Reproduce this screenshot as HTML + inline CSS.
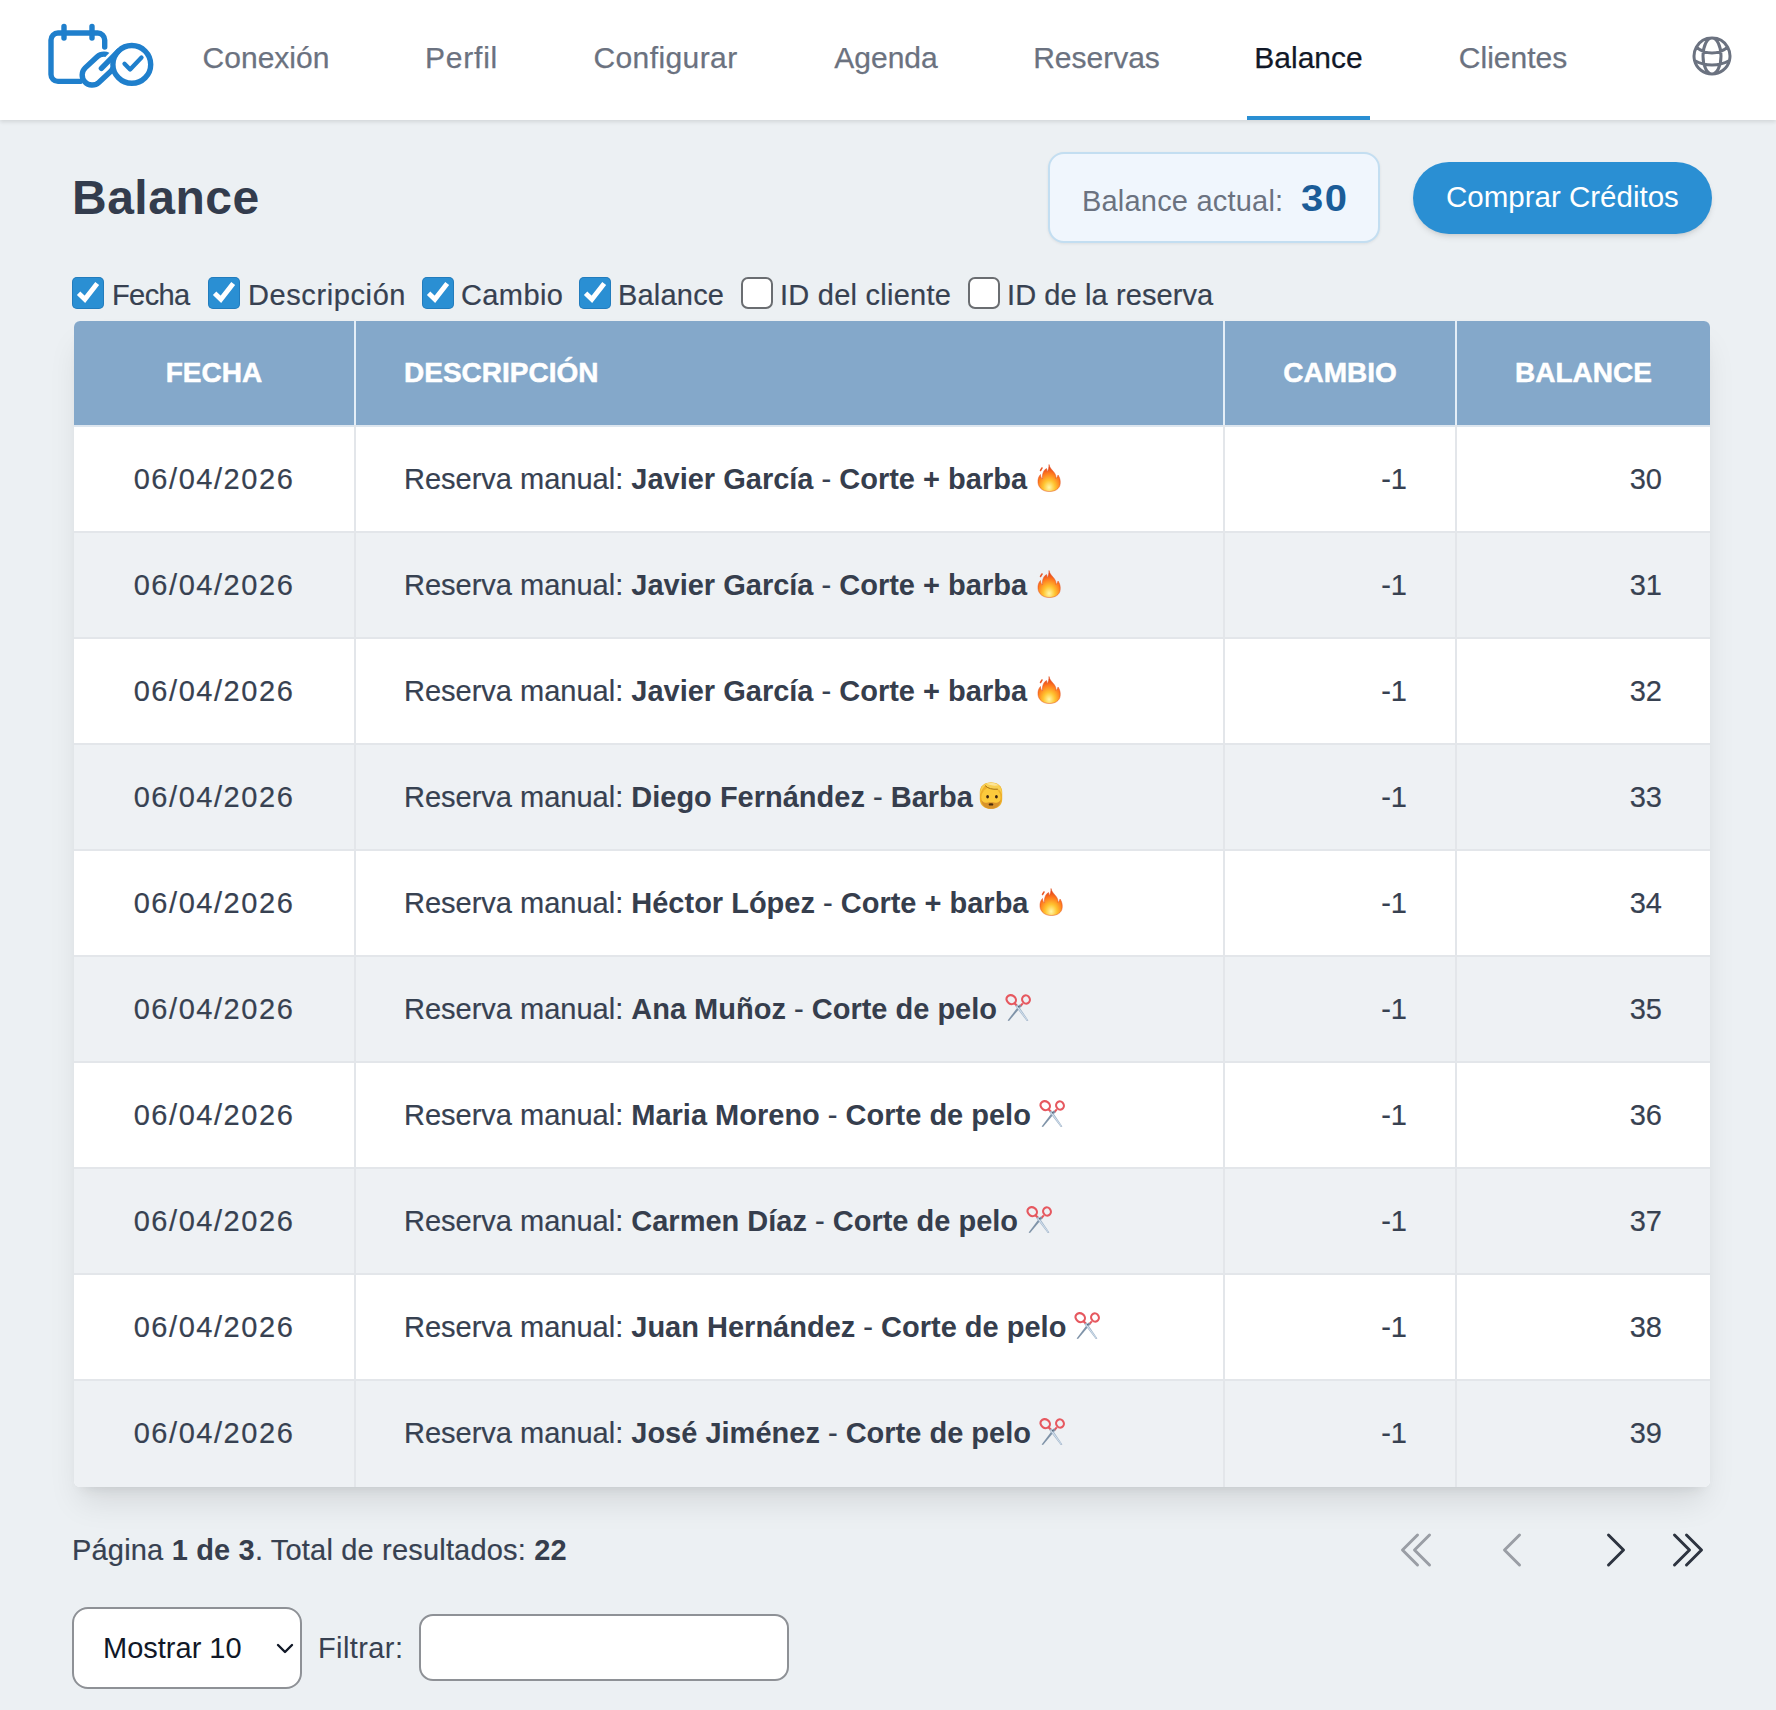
<!DOCTYPE html>
<html lang="es">
<head>
<meta charset="utf-8">
<title>Balance</title>
<style>
html,body{margin:0;padding:0}
body{width:1776px;height:1710px;overflow:hidden;position:relative;background:#ecf0f3;font-family:"Liberation Sans",sans-serif;color:#374151}
.abs{position:absolute}
.t{position:absolute;white-space:nowrap;line-height:40px;height:40px}
/* header */
#hdr{position:absolute;left:0;top:0;width:1776px;height:120px;background:#fff;box-shadow:0 2px 4px rgba(0,0,0,.11)}
.nav{position:absolute;top:37.6px;font-size:30px;color:#6b7280;-webkit-text-stroke:0.25px currentColor;line-height:40px;white-space:nowrap;transform:translateX(-50%)}
.nav.on{color:#111827}
#uline{position:absolute;left:1247px;top:116px;width:123px;height:4px;background:#2a8fd3}
/* title */
#title{position:absolute;left:72px;top:178px;font-size:48px;font-weight:700;color:#333c4d;line-height:40px;letter-spacing:0.5px}
#balbox{position:absolute;left:1048px;top:152px;width:328px;height:87px;border:2px solid #c3def1;border-radius:16px;background:#f0f6fd;box-sizing:content-box;box-shadow:0 1px 3px rgba(0,0,0,.07)}
#buy{position:absolute;left:1413px;top:162px;width:299px;height:72px;border-radius:36px;background:#2a8fd3;color:#fff;box-shadow:0 4px 6px -1px rgba(0,0,0,.10),0 2px 4px -2px rgba(0,0,0,.10)}
/* checkboxes */
.cb{position:absolute;top:277px;width:32px;height:32px;box-sizing:border-box;border-radius:6px}
.cb.on{background:#2a8fd3;box-shadow:inset 0 0 0 1px rgba(20,90,150,.35);border-radius:5px}
.cb.off{background:#fff;border:2px solid #6a6d71;border-radius:7px}
.cbl{position:absolute;top:275px;font-size:29px;color:#374151;line-height:40px;white-space:nowrap}
/* table */
#tbl{position:absolute;left:74px;top:321px;width:1636px;height:1166px;border-radius:6px;overflow:hidden;background:#fff;box-shadow:0 20px 30px -6px rgba(0,0,0,.10),0 8px 12px -8px rgba(0,0,0,.10)}
.th{position:absolute;top:0;height:104px;background:#84a8ca;color:#fff;font-weight:700;font-size:28px;-webkit-text-stroke:0.5px #fff;line-height:104px;white-space:nowrap}
.hline{position:absolute;left:0;top:104px;width:1636px;height:2px;background:#dde6ef}
.row{position:absolute;left:0;width:1636px;height:104px;font-size:29px;color:#374151;line-height:104px;white-space:nowrap}
.row.odd{background:#fff}
.row.even{background:#eef1f4}
.rline{position:absolute;left:0;width:1636px;height:2px;background:#e3e6ea}
.vline{position:absolute;top:0;width:2px;height:1166px;background:#e3e6ea}
.c1{position:absolute;left:0;width:280px;text-align:center;letter-spacing:1.55px}
.c2{position:absolute;left:330px}
.c3{position:absolute;left:1151px;width:182px;text-align:right}
.c4{position:absolute;left:1383px;width:205px;text-align:right}
.c2 b{font-weight:700;color:#363e4d;-webkit-text-stroke:0}
.row{-webkit-text-stroke:0.2px currentColor}
.cbl,#pag{-webkit-text-stroke:0.2px currentColor}
#pag b{-webkit-text-stroke:0}
.emo{display:inline-block;vertical-align:middle;margin-left:10px;position:relative;top:-3px}
/* footer */
#pag{position:absolute;left:72px;top:1530px;font-size:29px;letter-spacing:0.18px;line-height:40px;color:#374151;white-space:nowrap}
#pag b{color:#363e4d}
#sel{position:absolute;left:72px;top:1607px;width:229.5px;height:82px;box-sizing:border-box;border:2px solid #8e9196;border-radius:16px;background:#fff}
#inp{position:absolute;left:419px;top:1614px;width:370px;height:67px;box-sizing:border-box;border:2px solid #8e9196;border-radius:14px;background:#fff}
</style>
</head>
<body>
<div id="hdr">
  <svg class="abs" style="left:0;top:0" width="170" height="120" viewBox="0 0 170 120">
    <g fill="none" stroke="#1f7fcc" stroke-width="5.4" stroke-linecap="round" stroke-linejoin="round">
      <path d="M64 26.5V38M92 26.5V38"/>
      <path d="M80 81.4H58a7 7 0 0 1-7-7V40a7 7 0 0 1 7-7h39.7a7 7 0 0 1 7 7v7"/>
      <path d="M85.18 67.89L97.18 56.69A10 10 0 0 1 110.82 71.31L98.82 82.51A10 10 0 0 1 85.18 67.89Z"/>
      <path d="M101.4 68.4L118.4 51.1" stroke="#fff" stroke-width="10.5" stroke-linecap="butt"/>
      <circle cx="131.8" cy="64.4" r="18.9" fill="#fff"/>
      <path d="M101.4 68.4L118.4 51.1"/>
      <path d="M124.5 63.8L130.1 69.4L141.5 57.5" stroke-width="4.3"/>
    </g>
  </svg>
  <div class="nav" style="left:266px">Conexión</div>
  <div class="nav" style="left:461.5px;letter-spacing:0.8px">Perfil</div>
  <div class="nav" style="left:665.5px;letter-spacing:0.4px">Configurar</div>
  <div class="nav" style="left:886px">Agenda</div>
  <div class="nav" style="left:1096.5px">Reservas</div>
  <div class="nav on" style="left:1308.5px">Balance</div>
  <div class="nav" style="left:1513px">Clientes</div>
  <div id="uline"></div>
  <svg class="abs" style="left:1688px;top:32px" width="48" height="48" viewBox="0 0 24 24"><path fill="none" stroke="#6b7280" stroke-width="1.5" stroke-linecap="round" stroke-linejoin="round" d="M12 21a9.004 9.004 0 008.716-6.747M12 21a9.004 9.004 0 01-8.716-6.747M12 21c2.485 0 4.5-4.03 4.5-9S14.485 3 12 3m0 18c-2.485 0-4.5-4.03-4.5-9S9.515 3 12 3m0 0a8.997 8.997 0 017.843 4.582M12 3a8.997 8.997 0 00-7.843 4.582m15.686 0A11.953 11.953 0 0112 10.5c-2.998 0-5.74-1.1-7.843-2.918m15.686 0A8.959 8.959 0 0121 12c0 .778-.099 1.533-.284 2.253m0 0A17.919 17.919 0 0112 16.5c-3.162 0-6.133-.815-8.716-2.247m0 0A9.015 9.015 0 013 12c0-1.605.42-3.113 1.157-4.418"/></svg>
</div>

<div id="title">Balance</div>
<div id="balbox">
  <div class="t" style="left:32px;top:27px;font-size:29px;color:#6b7280;letter-spacing:0.2px">Balance actual:</div>
  <div class="t" style="left:251px;top:25px;font-size:37px;font-weight:700;color:#1b5c98;letter-spacing:1.5px;transform:scaleX(1.08);transform-origin:0 0">30</div>
</div>
<div id="buy"><div class="t" style="left:33px;top:15px;font-size:29.5px;color:#fff">Comprar Créditos</div></div>

<!-- checkboxes -->
<div class="cb on" style="left:72px"><svg width="32" height="32" viewBox="0 0 32 32" style="position:absolute;left:0;top:0"><path d="M6.6 16.2L12.9 22.3L25.2 6.4" fill="none" stroke="#fff" stroke-width="4.9" stroke-linecap="butt" stroke-linejoin="miter"/></svg></div>
<div class="cbl" style="left:112px;letter-spacing:-0.6px">Fecha</div>
<div class="cb on" style="left:208px"><svg width="32" height="32" viewBox="0 0 32 32" style="position:absolute;left:0;top:0"><path d="M6.6 16.2L12.9 22.3L25.2 6.4" fill="none" stroke="#fff" stroke-width="4.9" stroke-linecap="butt" stroke-linejoin="miter"/></svg></div>
<div class="cbl" style="left:248px;letter-spacing:0.6px">Descripción</div>
<div class="cb on" style="left:422px"><svg width="32" height="32" viewBox="0 0 32 32" style="position:absolute;left:0;top:0"><path d="M6.6 16.2L12.9 22.3L25.2 6.4" fill="none" stroke="#fff" stroke-width="4.9" stroke-linecap="butt" stroke-linejoin="miter"/></svg></div>
<div class="cbl" style="left:461px;letter-spacing:0.4px">Cambio</div>
<div class="cb on" style="left:579px"><svg width="32" height="32" viewBox="0 0 32 32" style="position:absolute;left:0;top:0"><path d="M6.6 16.2L12.9 22.3L25.2 6.4" fill="none" stroke="#fff" stroke-width="4.9" stroke-linecap="butt" stroke-linejoin="miter"/></svg></div>
<div class="cbl" style="left:618px;letter-spacing:0.2px">Balance</div>
<div class="cb off" style="left:741px"></div>
<div class="cbl" style="left:780px;letter-spacing:0.25px">ID del cliente</div>
<div class="cb off" style="left:968px"></div>
<div class="cbl" style="left:1007px;letter-spacing:0.1px">ID de la reserva</div>

<div id="tbl">
<div class="th" style="left:0px;width:280px;text-align:center">FECHA</div>
<div class="th" style="left:282px;width:867px;padding-left:48px;box-sizing:border-box">DESCRIPCIÓN</div>
<div class="th" style="left:1151px;width:230px;text-align:center">CAMBIO</div>
<div class="th" style="left:1383px;width:253px;text-align:center">BALANCE</div>
<div class="hline"></div>
<div class="row odd" style="top:106px"><div class="c1">06/04/2026</div><div class="c2">Reserva manual: <b>Javier García</b> - <b>Corte + barba</b><svg class="emo" width="24" height="28" viewBox="0 0 24 28"><defs><radialGradient id="fg0" cx="0.5" cy="0.85" r="0.75"><stop offset="0" stop-color="#fff7a8"/><stop offset="0.35" stop-color="#ffc430"/><stop offset="0.7" stop-color="#ff7a1e"/><stop offset="1" stop-color="#e4401a"/></radialGradient></defs><path d="M12 0.5C12.5 4 15.5 6 17.5 9c1.3 2 1.7 4 1.5 5.5c0.8-0.8 1.8-1.8 2-3.5c1.8 2.5 2.5 5.5 2.2 8.5C22.8 25 18 27.5 12.2 27.5C6 27.5 1.5 24 1 18.5C0.7 15 2 12 3.5 10.5c0 2 0.8 3.5 2 4.5C5 10.5 6.5 6 9.5 4.5C10 6 10 7 9.8 8C11.5 6 12 3.5 12 0.5z" fill="url(#fg0)" stroke="#e0501e" stroke-width="0.5"/><path d="M3.5 6.5 L5 4" stroke="#e85a2a" stroke-width="1.5" stroke-linecap="round"/></svg></div><div class="c3">-1</div><div class="c4">30</div></div>
<div class="rline" style="top:210px"></div>
<div class="row even" style="top:212px"><div class="c1">06/04/2026</div><div class="c2">Reserva manual: <b>Javier García</b> - <b>Corte + barba</b><svg class="emo" width="24" height="28" viewBox="0 0 24 28"><defs><radialGradient id="fg1" cx="0.5" cy="0.85" r="0.75"><stop offset="0" stop-color="#fff7a8"/><stop offset="0.35" stop-color="#ffc430"/><stop offset="0.7" stop-color="#ff7a1e"/><stop offset="1" stop-color="#e4401a"/></radialGradient></defs><path d="M12 0.5C12.5 4 15.5 6 17.5 9c1.3 2 1.7 4 1.5 5.5c0.8-0.8 1.8-1.8 2-3.5c1.8 2.5 2.5 5.5 2.2 8.5C22.8 25 18 27.5 12.2 27.5C6 27.5 1.5 24 1 18.5C0.7 15 2 12 3.5 10.5c0 2 0.8 3.5 2 4.5C5 10.5 6.5 6 9.5 4.5C10 6 10 7 9.8 8C11.5 6 12 3.5 12 0.5z" fill="url(#fg1)" stroke="#e0501e" stroke-width="0.5"/><path d="M3.5 6.5 L5 4" stroke="#e85a2a" stroke-width="1.5" stroke-linecap="round"/></svg></div><div class="c3">-1</div><div class="c4">31</div></div>
<div class="rline" style="top:316px"></div>
<div class="row odd" style="top:318px"><div class="c1">06/04/2026</div><div class="c2">Reserva manual: <b>Javier García</b> - <b>Corte + barba</b><svg class="emo" width="24" height="28" viewBox="0 0 24 28"><defs><radialGradient id="fg2" cx="0.5" cy="0.85" r="0.75"><stop offset="0" stop-color="#fff7a8"/><stop offset="0.35" stop-color="#ffc430"/><stop offset="0.7" stop-color="#ff7a1e"/><stop offset="1" stop-color="#e4401a"/></radialGradient></defs><path d="M12 0.5C12.5 4 15.5 6 17.5 9c1.3 2 1.7 4 1.5 5.5c0.8-0.8 1.8-1.8 2-3.5c1.8 2.5 2.5 5.5 2.2 8.5C22.8 25 18 27.5 12.2 27.5C6 27.5 1.5 24 1 18.5C0.7 15 2 12 3.5 10.5c0 2 0.8 3.5 2 4.5C5 10.5 6.5 6 9.5 4.5C10 6 10 7 9.8 8C11.5 6 12 3.5 12 0.5z" fill="url(#fg2)" stroke="#e0501e" stroke-width="0.5"/><path d="M3.5 6.5 L5 4" stroke="#e85a2a" stroke-width="1.5" stroke-linecap="round"/></svg></div><div class="c3">-1</div><div class="c4">32</div></div>
<div class="rline" style="top:422px"></div>
<div class="row even" style="top:424px"><div class="c1">06/04/2026</div><div class="c2">Reserva manual: <b>Diego Fernández</b> - <b>Barba</b><svg class="emo" style="margin-left:6px" width="24" height="28" viewBox="0 0 24 28"><path d="M0.8 10C0.8 3.6 5.6 0.4 12 0.4S23.2 3.6 23.2 10V17C23.2 23.5 18.5 26.8 12 26.8S0.8 23.5 0.8 17Z" fill="#eeb02a"/><ellipse cx="12" cy="15.6" rx="9.6" ry="10.4" fill="#fcca3c"/><path d="M1 12.5C0.8 4.2 5.8 0.4 12 0.4C18.6 0.4 23.3 4.5 23 12.5C22 9.5 20.6 7.8 18.8 7.2C14 7.5 9.2 6.6 6.2 3.6C4.2 5.6 2.4 8.8 1 12.5Z" fill="#f8cf52"/><path d="M7.5 1.6C11 0.6 16.5 0.8 19.5 3.2C16 4.2 11 3.6 7.5 1.6Z" fill="#fde7a0" opacity=".9"/><path d="M6.2 3.6C8.8 6.6 13.5 7.6 18.8 7.2" stroke="#9a6610" stroke-width="0.9" fill="none"/><ellipse cx="8.6" cy="14.8" rx="1.4" ry="1.7" fill="#3a2210"/><ellipse cx="17.4" cy="14.8" rx="1.4" ry="1.7" fill="#3a2210"/><path d="M2.2 18C3.2 24 6.8 26.8 12 26.8S20.8 24 21.8 18C19.8 20.6 17.2 21.2 15 20.6C13 20 11 20 9 20.6C6.8 21.2 4.2 20.6 2.2 18Z" fill="#d7922a"/><ellipse cx="12" cy="22.4" rx="2.4" ry="1.2" fill="#4a2c0c"/></svg></div><div class="c3">-1</div><div class="c4">33</div></div>
<div class="rline" style="top:528px"></div>
<div class="row odd" style="top:530px"><div class="c1">06/04/2026</div><div class="c2">Reserva manual: <b>Héctor López</b> - <b>Corte + barba</b><svg class="emo" width="24" height="28" viewBox="0 0 24 28"><defs><radialGradient id="fg4" cx="0.5" cy="0.85" r="0.75"><stop offset="0" stop-color="#fff7a8"/><stop offset="0.35" stop-color="#ffc430"/><stop offset="0.7" stop-color="#ff7a1e"/><stop offset="1" stop-color="#e4401a"/></radialGradient></defs><path d="M12 0.5C12.5 4 15.5 6 17.5 9c1.3 2 1.7 4 1.5 5.5c0.8-0.8 1.8-1.8 2-3.5c1.8 2.5 2.5 5.5 2.2 8.5C22.8 25 18 27.5 12.2 27.5C6 27.5 1.5 24 1 18.5C0.7 15 2 12 3.5 10.5c0 2 0.8 3.5 2 4.5C5 10.5 6.5 6 9.5 4.5C10 6 10 7 9.8 8C11.5 6 12 3.5 12 0.5z" fill="url(#fg4)" stroke="#e0501e" stroke-width="0.5"/><path d="M3.5 6.5 L5 4" stroke="#e85a2a" stroke-width="1.5" stroke-linecap="round"/></svg></div><div class="c3">-1</div><div class="c4">34</div></div>
<div class="rline" style="top:634px"></div>
<div class="row even" style="top:636px"><div class="c1">06/04/2026</div><div class="c2">Reserva manual: <b>Ana Muñoz</b> - <b>Corte de pelo</b><svg class="emo" style="margin-left:8px" width="28" height="28" viewBox="0 0 28 28"><g fill="none" stroke="#e6585f" stroke-width="2.1"><ellipse cx="6.2" cy="5.6" rx="4.9" ry="4.3" transform="rotate(35 6.2 5.6)"/><ellipse cx="21" cy="5.5" rx="3.8" ry="4.2" transform="rotate(-25 21 5.5)"/><path d="M9.6 9.2L12.4 12.2M17.8 9.4L15.2 12.2"/></g><polygon points="14.6,10.6 16.6,12 4.0,27.0 2.6,26.4" fill="#7f93a8"/><polygon points="12.6,10.6 10.4,12.2 21.8,27.0 23.4,26.4" fill="#9fb3c8"/><polygon points="12.2,11.8 11.4,12.6 21.9,26.2 22.6,25.9" fill="#d6e3f0"/><circle cx="13.6" cy="12.6" r="0.9" fill="#5a6b7d"/></svg></div><div class="c3">-1</div><div class="c4">35</div></div>
<div class="rline" style="top:740px"></div>
<div class="row odd" style="top:742px"><div class="c1">06/04/2026</div><div class="c2">Reserva manual: <b>Maria Moreno</b> - <b>Corte de pelo</b><svg class="emo" style="margin-left:8px" width="28" height="28" viewBox="0 0 28 28"><g fill="none" stroke="#e6585f" stroke-width="2.1"><ellipse cx="6.2" cy="5.6" rx="4.9" ry="4.3" transform="rotate(35 6.2 5.6)"/><ellipse cx="21" cy="5.5" rx="3.8" ry="4.2" transform="rotate(-25 21 5.5)"/><path d="M9.6 9.2L12.4 12.2M17.8 9.4L15.2 12.2"/></g><polygon points="14.6,10.6 16.6,12 4.0,27.0 2.6,26.4" fill="#7f93a8"/><polygon points="12.6,10.6 10.4,12.2 21.8,27.0 23.4,26.4" fill="#9fb3c8"/><polygon points="12.2,11.8 11.4,12.6 21.9,26.2 22.6,25.9" fill="#d6e3f0"/><circle cx="13.6" cy="12.6" r="0.9" fill="#5a6b7d"/></svg></div><div class="c3">-1</div><div class="c4">36</div></div>
<div class="rline" style="top:846px"></div>
<div class="row even" style="top:848px"><div class="c1">06/04/2026</div><div class="c2">Reserva manual: <b>Carmen Díaz</b> - <b>Corte de pelo</b><svg class="emo" style="margin-left:8px" width="28" height="28" viewBox="0 0 28 28"><g fill="none" stroke="#e6585f" stroke-width="2.1"><ellipse cx="6.2" cy="5.6" rx="4.9" ry="4.3" transform="rotate(35 6.2 5.6)"/><ellipse cx="21" cy="5.5" rx="3.8" ry="4.2" transform="rotate(-25 21 5.5)"/><path d="M9.6 9.2L12.4 12.2M17.8 9.4L15.2 12.2"/></g><polygon points="14.6,10.6 16.6,12 4.0,27.0 2.6,26.4" fill="#7f93a8"/><polygon points="12.6,10.6 10.4,12.2 21.8,27.0 23.4,26.4" fill="#9fb3c8"/><polygon points="12.2,11.8 11.4,12.6 21.9,26.2 22.6,25.9" fill="#d6e3f0"/><circle cx="13.6" cy="12.6" r="0.9" fill="#5a6b7d"/></svg></div><div class="c3">-1</div><div class="c4">37</div></div>
<div class="rline" style="top:952px"></div>
<div class="row odd" style="top:954px"><div class="c1">06/04/2026</div><div class="c2">Reserva manual: <b>Juan Hernández</b> - <b>Corte de pelo</b><svg class="emo" style="margin-left:8px" width="28" height="28" viewBox="0 0 28 28"><g fill="none" stroke="#e6585f" stroke-width="2.1"><ellipse cx="6.2" cy="5.6" rx="4.9" ry="4.3" transform="rotate(35 6.2 5.6)"/><ellipse cx="21" cy="5.5" rx="3.8" ry="4.2" transform="rotate(-25 21 5.5)"/><path d="M9.6 9.2L12.4 12.2M17.8 9.4L15.2 12.2"/></g><polygon points="14.6,10.6 16.6,12 4.0,27.0 2.6,26.4" fill="#7f93a8"/><polygon points="12.6,10.6 10.4,12.2 21.8,27.0 23.4,26.4" fill="#9fb3c8"/><polygon points="12.2,11.8 11.4,12.6 21.9,26.2 22.6,25.9" fill="#d6e3f0"/><circle cx="13.6" cy="12.6" r="0.9" fill="#5a6b7d"/></svg></div><div class="c3">-1</div><div class="c4">38</div></div>
<div class="rline" style="top:1058px"></div>
<div class="row even" style="top:1060px;height:106px"><div class="c1">06/04/2026</div><div class="c2">Reserva manual: <b>José Jiménez</b> - <b>Corte de pelo</b><svg class="emo" style="margin-left:8px" width="28" height="28" viewBox="0 0 28 28"><g fill="none" stroke="#e6585f" stroke-width="2.1"><ellipse cx="6.2" cy="5.6" rx="4.9" ry="4.3" transform="rotate(35 6.2 5.6)"/><ellipse cx="21" cy="5.5" rx="3.8" ry="4.2" transform="rotate(-25 21 5.5)"/><path d="M9.6 9.2L12.4 12.2M17.8 9.4L15.2 12.2"/></g><polygon points="14.6,10.6 16.6,12 4.0,27.0 2.6,26.4" fill="#7f93a8"/><polygon points="12.6,10.6 10.4,12.2 21.8,27.0 23.4,26.4" fill="#9fb3c8"/><polygon points="12.2,11.8 11.4,12.6 21.9,26.2 22.6,25.9" fill="#d6e3f0"/><circle cx="13.6" cy="12.6" r="0.9" fill="#5a6b7d"/></svg></div><div class="c3">-1</div><div class="c4">39</div></div>
<div class="vline" style="left:280px"></div>
<div class="vline" style="left:280px;height:104px;background:#e4eef7"></div>
<div class="vline" style="left:1149px"></div>
<div class="vline" style="left:1149px;height:104px;background:#e4eef7"></div>
<div class="vline" style="left:1381px"></div>
<div class="vline" style="left:1381px;height:104px;background:#e4eef7"></div>
</div>

<div id="pag">Página <b>1 de 3</b>. Total de resultados: <b>22</b></div>
<svg class="abs" style="left:1392px;top:1526.3px" width="48" height="48" viewBox="0 0 24 24"><path d="M18.75 19.5l-7.5-7.5 7.5-7.5m-6 15L5.25 12l7.5-7.5" fill="none" stroke="#9a9ea5" stroke-width="1.5" stroke-linecap="round" stroke-linejoin="round"/></svg>
<svg class="abs" style="left:1488px;top:1526.3px" width="48" height="48" viewBox="0 0 24 24"><path d="M15.75 19.5L8.25 12l7.5-7.5" fill="none" stroke="#9a9ea5" stroke-width="1.5" stroke-linecap="round" stroke-linejoin="round"/></svg>
<svg class="abs" style="left:1592px;top:1526.3px" width="48" height="48" viewBox="0 0 24 24"><path d="M8.25 4.5l7.5 7.5-7.5 7.5" fill="none" stroke="#2d3440" stroke-width="1.5" stroke-linecap="round" stroke-linejoin="round"/></svg>
<svg class="abs" style="left:1664px;top:1526.3px" width="48" height="48" viewBox="0 0 24 24"><path d="M11.25 4.5l7.5 7.5-7.5 7.5m-6-15l7.5 7.5-7.5 7.5" fill="none" stroke="#2d3440" stroke-width="1.5" stroke-linecap="round" stroke-linejoin="round"/></svg>
<div id="sel"><div class="t" style="left:29px;top:19px;font-size:29px;color:#111827">Mostrar 10</div><svg class="abs" style="left:201px;top:33px" width="20" height="14" viewBox="0 0 20 14"><path d="M3 3L10 10L17 3" fill="none" stroke="#111827" stroke-width="2.4" stroke-linecap="round" stroke-linejoin="round"/></svg></div>
<div class="t" style="left:318px;top:1628px;font-size:29px;color:#374151;letter-spacing:0.4px">Filtrar:</div>
<div id="inp"></div>
</body>
</html>
